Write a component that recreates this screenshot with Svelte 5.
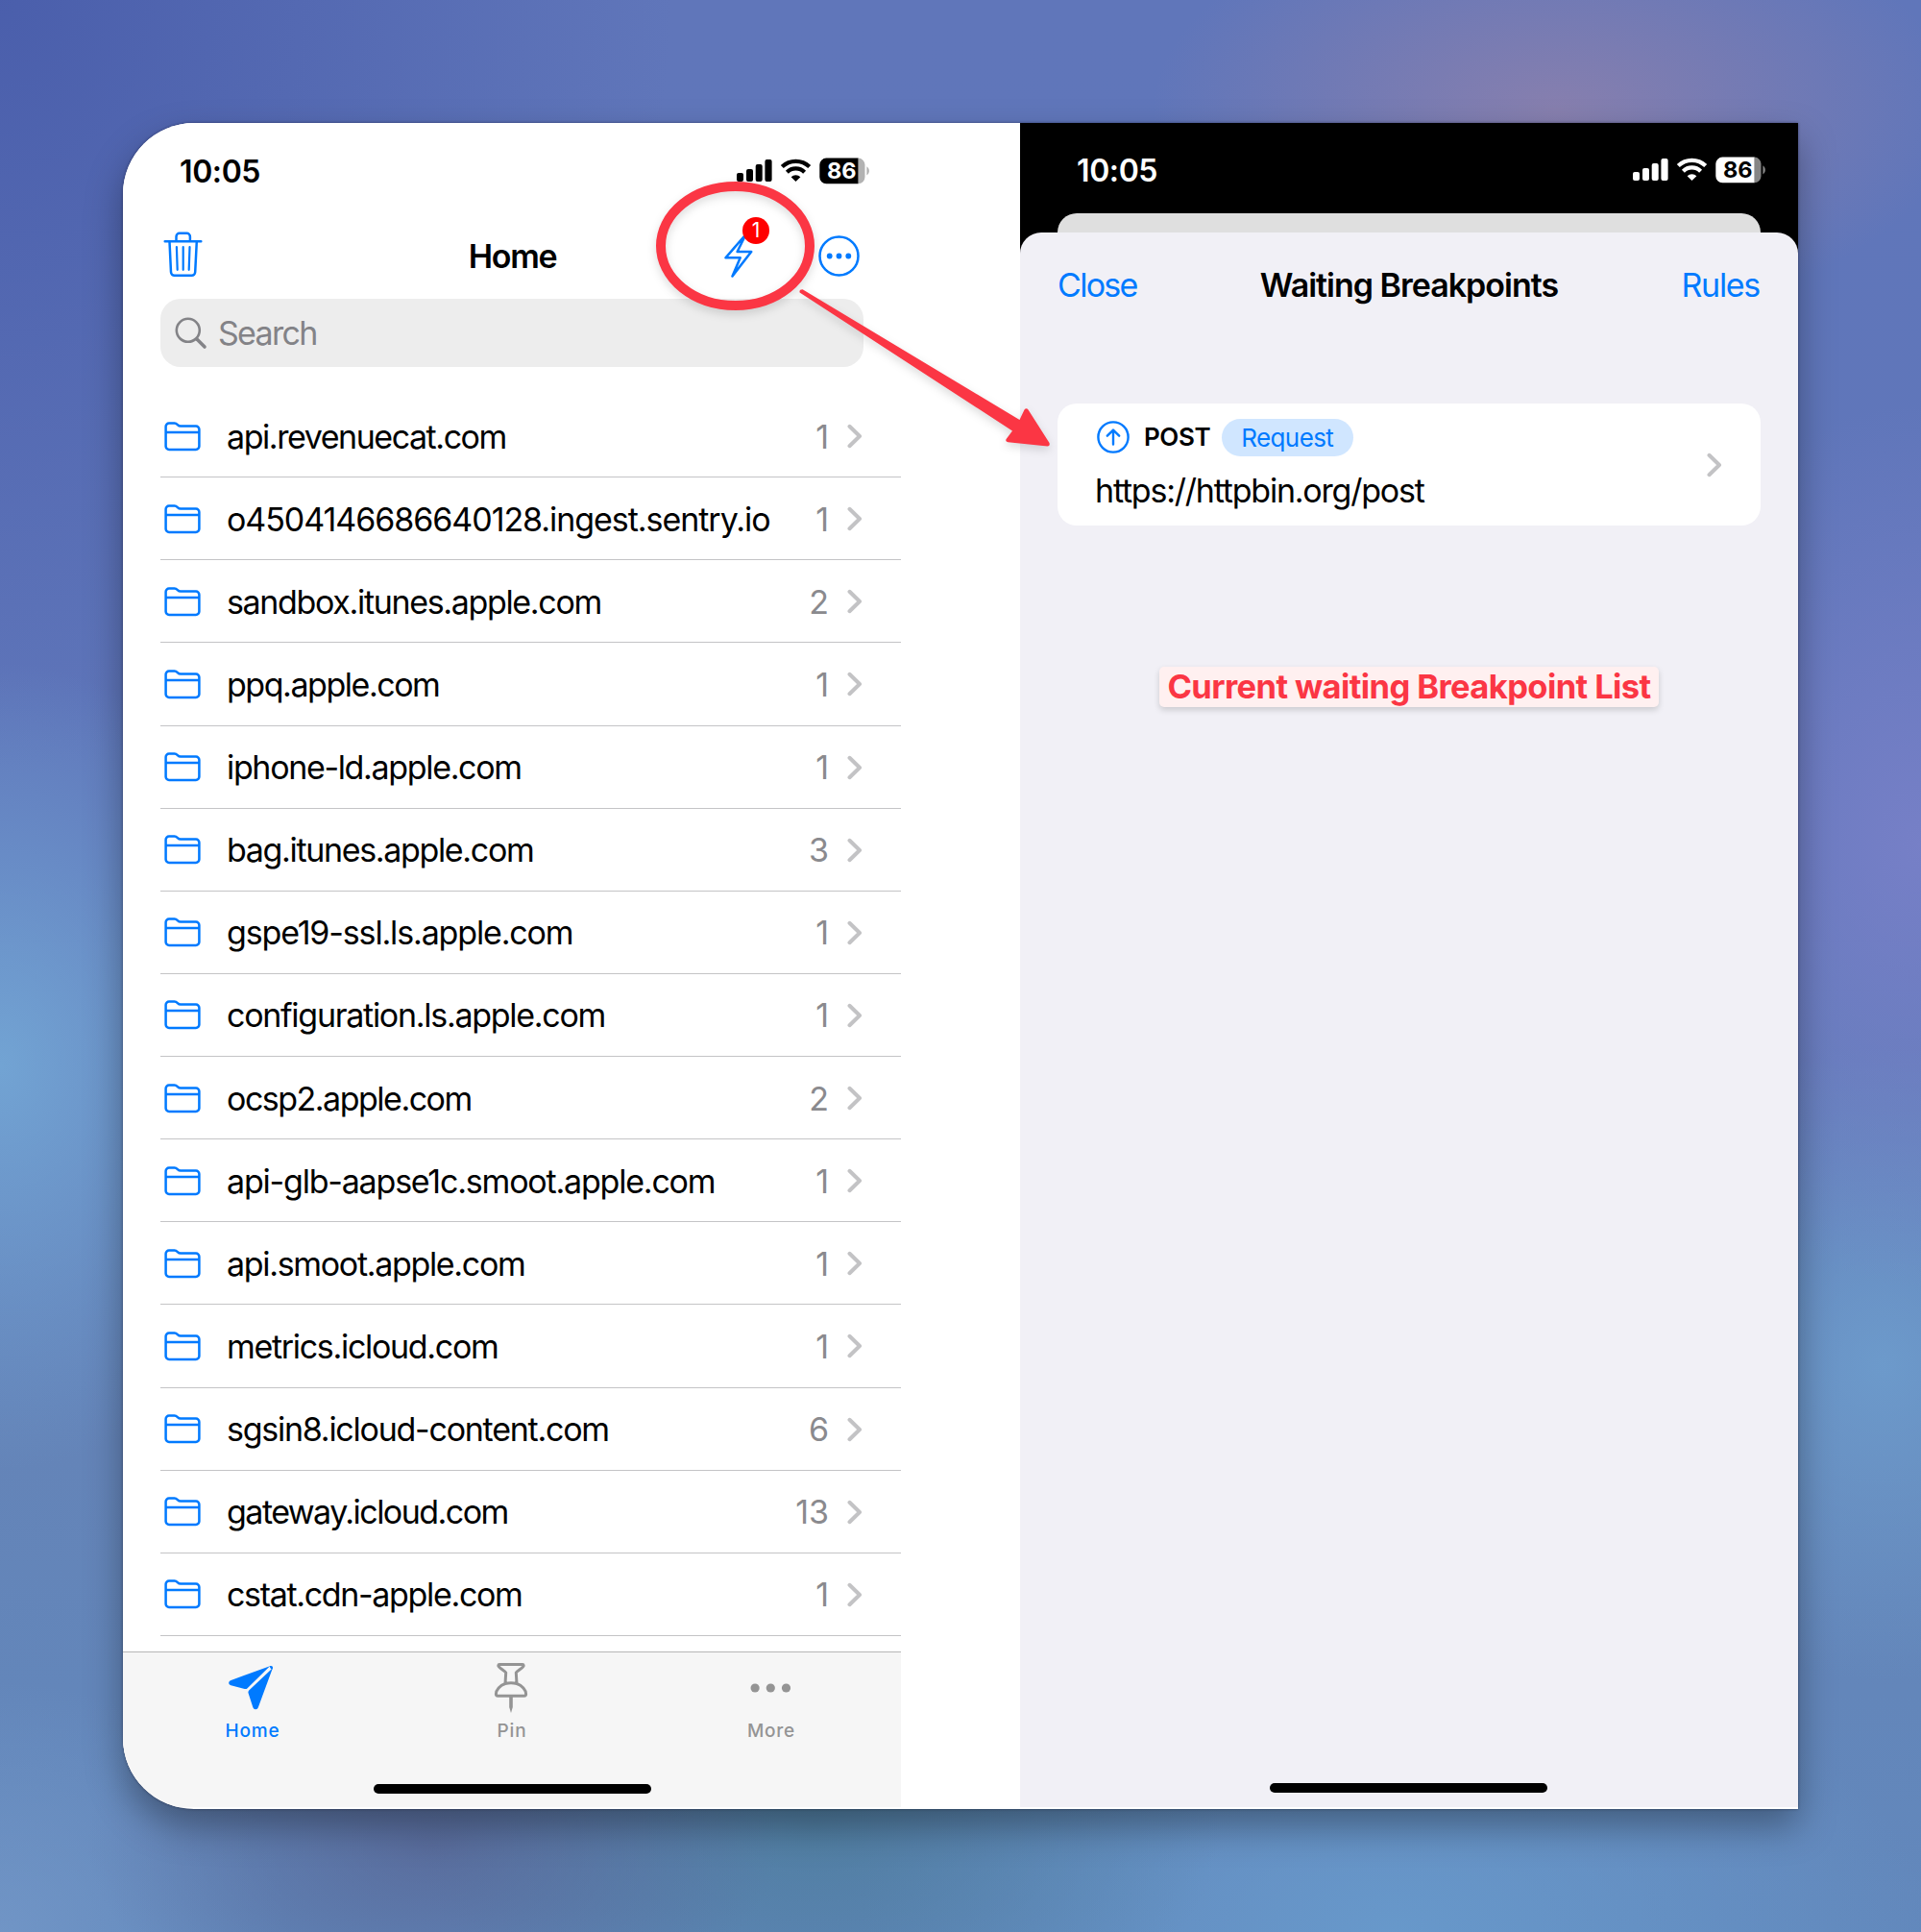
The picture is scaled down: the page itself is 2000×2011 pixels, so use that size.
<script>
  // host, request count, letter tracking in px
  const hosts = [
    ['api.revenuecat.com', 1, -1.45],
    ['o4504146686640128.ingest.sentry.io', 1, -1.05],
    ['sandbox.itunes.apple.com', 2, -1.34],
    ['ppq.apple.com', 1, -1.46],
    ['iphone-ld.apple.com', 1, -1.34],
    ['bag.itunes.apple.com', 3, -1.34],
    ['gspe19-ssl.ls.apple.com', 1, -1.15],
    ['configuration.ls.apple.com', 1, -1.28],
    ['ocsp2.apple.com', 2, -1.5],
    ['api-glb-aapse1c.smoot.apple.com', 1, -1.2],
    ['api.smoot.apple.com', 1, -1.32],
    ['metrics.icloud.com', 1, -1.31],
    ['sgsin8.icloud-content.com', 6, -1.25],
    ['gateway.icloud.com', 13, -1.53],
    ['cstat.cdn-apple.com', 1, -1.33]
  ];
</script>

{#snippet status()}
  <div class="status">
    <span class="clock">10:05</span>
    <svg class="signals" width="139" height="28" viewBox="0 0 139 28">
      <g fill="currentColor">
        <rect x="0" y="16" width="7" height="9" rx="2" />
        <rect x="10" y="12" width="7" height="13" rx="2" />
        <rect x="19.7" y="7" width="7" height="18" rx="2" />
        <rect x="29.4" y="2" width="7.2" height="23" rx="2" />
        <path d="M61.5 25 L56.6 20.2 A7.2 7.2 0 0 1 66.4 20.2 Z" />
      </g>
      <g fill="none" stroke="currentColor" stroke-width="4.2">
        <path d="M47.3 9.6 A20.3 20.3 0 0 1 75.7 9.6" />
        <path d="M52.4 15.2 A12.9 12.9 0 0 1 70.6 15.2" />
      </g>
      <path class="rest" d="M126 .6 h.5 a7 7 0 0 1 7 7 v12.6 a7 7 0 0 1 -7 7 h-.5 z M135.4 9.3 a5.5 5.5 0 0 1 0 9.2 z" />
      <path fill="currentColor" d="M93.3 .6 H126.4 V27.2 H93.3 a7 7 0 0 1 -7 -7 V7.6 a7 7 0 0 1 7 -7 z" />
      <text class="pct" x="109.3" y="22">86</text>
    </svg>
  </div>
{/snippet}

{#snippet chevron()}
  <svg class="chev" width="16" height="26" viewBox="0 0 16 26"><path d="M2.500 2.800 L13 13 L2.500 23.200" /></svg>
{/snippet}

<div class="stage">
  <div class="board">
    <section class="phone home">
      {@render status()}
      <header class="nav">
        <svg width="42" height="50" viewBox="-1.500 1 42 50" class="line">
          <path d="M1.200 11.200 H38.800 M13 11 V6.200 a3.400 3.400 0 0 1 3.400 -3.400 h7.600 a3.400 3.400 0 0 1 3.400 3.400 V11 M6 11.500 L7.500 43.300 a3.600 3.600 0 0 0 3.600 3.400 h18 a3.600 3.600 0 0 0 3.600 -3.400 L34.300 11.500" stroke-width="2.500" />
          <path d="M13.400 17.200 L14.200 40.800 M20.200 17.200 V40.800 M27 17.200 L26.200 40.800" stroke-width="2.200" />
        </svg>
        <h1>Home</h1>
        <div class="actions">
          <div class="bolt">
            <svg width="32" height="48" viewBox="0 0 32 48" class="line"><path d="M23.500 2 L2.500 26.300 H17.700 L9.500 45.500 L29.200 20 H14.600 Z" stroke-width="2.500" /></svg>
            <span class="count">1</span>
          </div>
          <svg width="44" height="44" viewBox="0.500 -0.500 44 44" class="line">
            <circle cx="22" cy="22" r="20" stroke-width="2.500" />
            <g fill="#007aff" stroke="none"><circle cx="12.200" cy="22" r="2.900" /><circle cx="22" cy="22" r="2.900" /><circle cx="31.800" cy="22" r="2.900" /></g>
          </svg>
        </div>
      </header>
      <div class="search">
        <svg width="34" height="34" viewBox="0 0 34 34"><circle cx="13.800" cy="13.800" r="12" stroke-width="2.600" /><path d="M23 23 L31 31" stroke-width="3.600" /></svg>
        <span>Search</span>
      </div>
      <ul>
        {#each hosts as [host, n, tracking]}
          <li>
            <svg width="38" height="31" viewBox="0 0 38 31" class="line">
              <path d="M1.600 25.500 V5 a3.400 3.400 0 0 1 3.400 -3.400 h5.600 c3.400 0 3.100 3 6.400 3 h16 a3.400 3.400 0 0 1 3.400 3.400 v17.500 a3.400 3.400 0 0 1 -3.400 3.400 h-28 a3.400 3.400 0 0 1 -3.400 -3.400 z M1.600 11.100 H36.400" stroke-width="2.500" />
            </svg>
            <span class="host" style:letter-spacing="{tracking}px">{host}</span>
            <span class="n">{n}</span>
            {@render chevron()}
          </li>
        {/each}
      </ul>
      <nav class="tabs">
        <div class="tab on">
          <svg width="50" height="54" viewBox="2 -0.700 50 54" fill="currentColor">
            <path d="M45 3.500 L4.500 18.300 C1.300 19.600 1.600 22.800 4.400 23.500 L18.700 27.300 C20 27.600 20.800 27.300 21.600 26.500 Z" />
            <path d="M47.900 5.600 L33 46 C31.800 49.500 28.400 49.300 27.300 46.300 L22.600 31.800 C22.200 30.400 22.500 29.500 23.200 28.700 Z" />
            <path d="M44.500 3.700 C47 2.800 48.700 4 47.800 6.500 L46.300 6.800 Z" />
          </svg>
          <span>Home</span>
        </div>
        <div class="tab">
          <svg width="50" height="54" viewBox="1 -1 50 54" fill="none" stroke="currentColor" stroke-width="3" stroke-linejoin="round">
            <path d="M13 1.600 H37 C38.400 1.600 38.500 3 37.500 4 C35 6.500 31.600 8 30.300 10 L31 21.500 C36.500 23.300 40.600 28 40.600 32.300 C40.600 33.600 40 34.200 38.800 34.200 H11.200 C10 34.200 9.400 33.600 9.400 32.300 C9.400 28 13.500 23.300 19 21.500 L19.700 10 C18.400 8 15 6.500 12.500 4 C11.500 3 11.600 1.600 13 1.600 Z M19 21.500 Q25 20 31 21.500" />
            <path d="M23.200 35 H26.800 V46 L25 52 L23.200 46 Z" fill="currentColor" stroke="none" />
          </svg>
          <span>Pin</span>
        </div>
        <div class="tab">
          <svg width="50" height="54" viewBox="0.400 -0.500 50 54" fill="currentColor"><circle cx="8.500" cy="26.500" r="4.600" /><circle cx="24.700" cy="26.500" r="4.600" /><circle cx="40.900" cy="26.500" r="4.600" /></svg>
          <span>More</span>
        </div>
      </nav>
      <div class="indicator"></div>
    </section>

    <section class="phone modal">
      {@render status()}
      <div class="behind"></div>
      <div class="sheet">
        <header>
          <span class="link close">Close</span>
          <h2>Waiting Breakpoints</h2>
          <span class="link rules">Rules</span>
        </header>
        <article>
          <div class="info">
            <div class="method">
              <svg width="34" height="34" viewBox="0 0 34 34" class="line"><circle cx="17" cy="17" r="15.600" stroke-width="2.400" /><path d="M17 24.500 V10 M10.800 15.700 L17 9.600 L23.200 15.700" stroke-width="2.400" /></svg>
              <b>POST</b>
              <span class="badge">Request</span>
            </div>
            <div class="url">https://httpbin.org/post</div>
          </div>
          {@render chevron()}
        </article>
        <p class="note">Current waiting Breakpoint List</p>
        <div class="indicator"></div>
      </div>
    </section>
  </div>

  <!-- hand-drawn callout: ring around the bolt and arrow to the modal -->
  <svg class="marks" width="440" height="300" viewBox="670 180 440 300">
    <ellipse cx="765.500" cy="256" rx="77.500" ry="62" fill="none" stroke="#fb3644" stroke-width="10" />
    <path d="M832.600 304.400 Q831.800 301.200 835.600 301.200 L1061.500 437 L1066.500 426.500 Q1068.500 424 1070.500 426.500 L1092.500 461 Q1093.500 464.500 1090.500 464.500 L1049.500 460.300 Q1045.800 459.300 1048 456.500 L1054 448.500 Z" fill="#fb3644" />
  </svg>
</div>

<style>
  :global(body) { margin: 0; }
  .stage {
    position: relative;
    box-sizing: border-box;
    width: 2000px;
    height: 2011px;
    padding: 128px;
    overflow: hidden;
    font-family: Inter, "Liberation Sans", sans-serif;
    color: #000;
    background:
      radial-gradient(ellipse 420px 220px at 1620px 115px, rgba(148, 130, 170, .75), rgba(148, 130, 170, 0)),
      radial-gradient(ellipse 330px 420px at 0 1110px, rgba(116, 168, 214, .9), rgba(116, 168, 214, 0)),
      radial-gradient(ellipse 330px 460px at 2000px 880px, rgba(124, 130, 202, .8), rgba(124, 130, 202, 0)),
      radial-gradient(ellipse 300px 330px at 1960px 1420px, rgba(110, 158, 206, .85), rgba(110, 158, 206, 0)),
      radial-gradient(ellipse 360px 200px at 450px 1920px, rgba(84, 94, 140, .65), rgba(84, 94, 140, 0)),
      radial-gradient(ellipse 420px 260px at 850px 1900px, rgba(76, 124, 156, .8), rgba(76, 124, 156, 0)),
      radial-gradient(ellipse 560px 300px at 1450px 2011px, rgba(104, 154, 204, .9), rgba(104, 154, 204, 0)),
      radial-gradient(ellipse 300px 260px at 0 2011px, rgba(116, 152, 200, .8), rgba(116, 152, 200, 0)),
      radial-gradient(ellipse 700px 800px at 0 0, rgba(72, 92, 170, .9), rgba(72, 92, 170, 0)),
      linear-gradient(180deg, #6076ba 0, #5f76ba 45%, #6484b8 75%, #6288bc 100%);
  }
  .board {
    display: flex;
    justify-content: space-between;
    box-sizing: border-box;
    width: 1744px;
    height: 1755px;
    padding-bottom: 2px;
    background: #fff;
    border-radius: 74px 0 0 74px;
    overflow: hidden;
    box-shadow: 0 18px 38px rgba(0, 0, 0, .34), 0 0 3px rgba(0, 0, 30, .45);
  }
  .phone { display: flex; flex-direction: column; width: 810px; }
  .home { background: linear-gradient(#fff 1600px, #f6f6f6 1600px); }
  .modal { background: #000; color: #fff; }
  .status {
    display: flex;
    justify-content: space-between;
    align-items: center;
    height: 28px;
    margin: 36px 32px 0 59px;
  }
  .modal .status { margin-top: 35px; margin-right: 33px; }
  .clock { padding-top: 1px; font-size: 32px; line-height: 28px; font-weight: 600; letter-spacing: -.4px; }
  .pct { font: 700 23.5px Inter, sans-serif; text-anchor: middle; fill: #fff; }
  .modal .pct { fill: #000; }
  .rest { fill: #b2b2b2; }
  .modal .rest { fill: #858585; }
  .line { fill: none; stroke: #007aff; stroke-linecap: round; stroke-linejoin: round; }
  .chev { fill: none; stroke: #c3c3c5; stroke-width: 4; stroke-linecap: round; stroke-linejoin: round; flex: none; }
  h1, h2 { margin: 0; font-size: 34px; font-weight: 600; line-height: 44px; text-align: center; letter-spacing: -1px; }
  h1 { letter-spacing: -1.3px; padding: 1px 0 0 2px; }
  .nav {
    display: grid;
    grid-template-columns: 1fr auto 1fr;
    align-items: center;
    height: 60px;
    margin: 44px 42px 0 41px;
  }
  .actions { display: flex; justify-content: flex-end; align-items: center; gap: 67px; }
  .bolt { position: relative; width: 32px; height: 48px; }
  .count {
    position: absolute;
    left: 20px;
    top: -16px;
    width: 28px;
    height: 28px;
    border-radius: 50%;
    background: #f00;
    color: #fff;
    font-size: 21px;
    line-height: 28px;
    text-align: center;
  }
  .search {
    display: flex;
    align-items: center;
    gap: 11px;
    height: 71px;
    margin: 15px 39px 0;
    padding-left: 15px;
    border-radius: 21px;
    background: #ededed;
    color: #838387;
    font-size: 34px;
    letter-spacing: -1.7px;
  }
  .search svg { fill: none; stroke: #838387; stroke-linecap: round; }
  ul { list-style: none; margin: 29px 0 0; padding: 0 0 0 39px; flex: 1; }
  li {
    display: flex;
    align-items: center;
    box-sizing: border-box;
    height: 86.13px;
    padding: 1px 40px 0 4px;
    border-bottom: 1px solid #c4c4c6;
    font-size: 34px;
  }
  .host { margin-left: 27px; flex: 1; white-space: nowrap; }
  .n { color: #8a8a8e; }
  li .chev { margin-left: 19px; }
  .tabs {
    display: grid;
    grid-template-columns: repeat(3, 1fr);
    height: 138px;
    box-sizing: border-box;
    padding-top: 10px;
    border-top: 1px solid #b6b6b6;
    background: #f6f6f6;
    color: #949494;
  }
  .tab { display: flex; flex-direction: column; align-items: center; font-size: 19px; font-weight: 500; line-height: 24px; letter-spacing: .8px; }
  .tab span { margin-top: 6px; }
  .on { color: #007aff; }
  .indicator { width: 289px; height: 10px; border-radius: 5px; background: #000; }
  .home .indicator { align-self: center; margin-bottom: 14px; }
  .behind { height: 20px; margin: 31px 39px 0; border-radius: 20px 20px 0 0; background: #dfdfdf; }
  .sheet {
    display: flex;
    flex-direction: column;
    flex: 1;
    border-radius: 22px 22px 0 0;
    background: #f1f0f6;
    color: #000;
  }
  .sheet header {
    display: grid;
    grid-template-columns: 1fr auto 1fr;
    align-items: center;
    margin: 33px 39px 0;
  }
  .link { color: #007aff; font-size: 34px; line-height: 44px; }
  .close { letter-spacing: -1.7px; }
  .rules { letter-spacing: -1.3px; padding-right: 1px; text-align: right; }
  article {
    display: flex;
    align-items: center;
    justify-content: space-between;
    box-sizing: border-box;
    height: 127px;
    margin: 101px 39px 0;
    padding: 0 40px 0 39px;
    border-radius: 20px;
    background: #fff;
  }
  .info { display: flex; flex-direction: column; gap: 15px; }
  .method { display: flex; align-items: center; padding-left: 2px; }
  .method b { margin-left: 15px; font-size: 26px; font-weight: 600; line-height: 38px; letter-spacing: -.4px; }
  .badge {
    margin-left: 12px;
    padding: 0 21px 0 20px;
    border-radius: 20px;
    background: #d0e6ff;
    color: #007aff;
    font-size: 26px;
    line-height: 39px;
    letter-spacing: -.6px;
  }
  .url { font-size: 34px; line-height: 42px; letter-spacing: -1.22px; }
  .note {
    align-self: center;
    margin: 147px 0 0;
    padding: 0 8px;
    border-radius: 5px;
    background: #fff0f0;
    color: #fb3644;
    font-size: 34.5px;
    font-weight: 700;
    line-height: 42px;
    letter-spacing: -.6px;
    box-shadow: 0 3px 6px rgba(0, 0, 0, .16);
  }
  .sheet .indicator { margin: auto 0 15px 260px; }
  .marks { position: absolute; left: 670px; top: 180px; filter: drop-shadow(0 4px 5px rgba(0, 0, 0, .14)); }
</style>
